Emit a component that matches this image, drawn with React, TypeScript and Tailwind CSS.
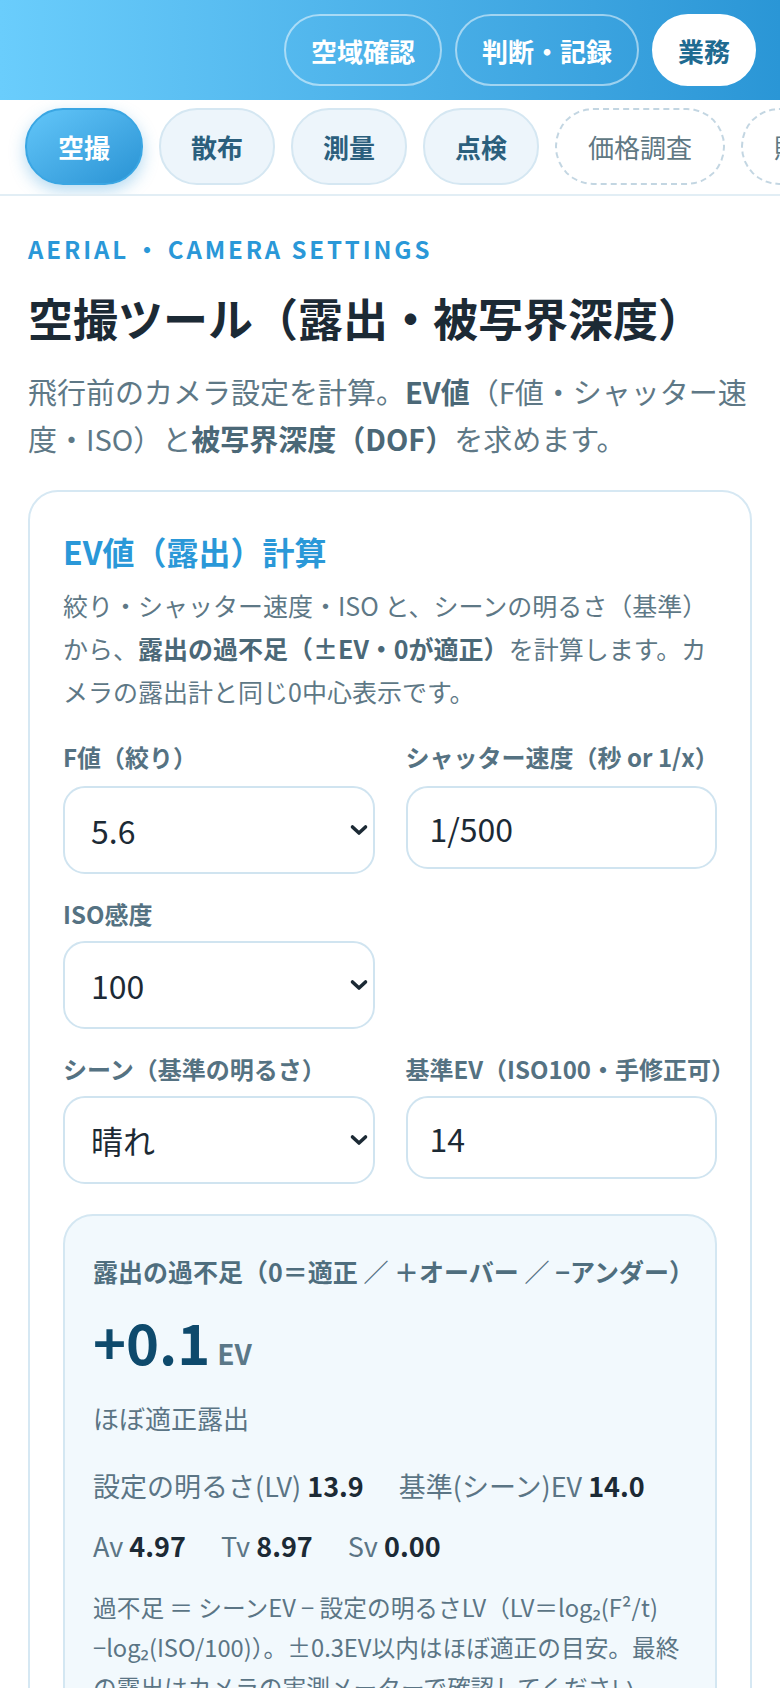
import { useState } from "react";

const topLinks = ["空域確認", "判断・記録"];
const tabs = ["空撮", "散布", "測量", "点検"];
const extraTabs = ["価格調査", "販売"];

function Chevron() {
  return (
    <svg
      className="pointer-events-none absolute right-[6px] top-1/2 -translate-y-1/2"
      width="20"
      height="13"
      viewBox="0 0 20 13"
      fill="none"
    >
      <path d="M3.5 3.5 L10 9.5 L16.5 3.5" stroke="#1c2a35" strokeWidth="3.6" strokeLinecap="round" strokeLinejoin="round" />
    </svg>
  );
}

const selectCls =
  "h-[88px] w-full appearance-none rounded-[22px] border-2 border-[#d0e4f0] bg-white pl-[26px] pr-[30px] text-[32px] text-[#1c2a35] outline-none";
const inputCls =
  "h-[83px] w-full rounded-[22px] border-2 border-[#d0e4f0] bg-white px-[22px] text-[32px] text-[#1c2a35] outline-none";
const labelCls = "block whitespace-nowrap text-[24px] font-bold leading-[36px] text-[#557282]";

export default function App() {
  const [fNum, setFNum] = useState("5.6");
  const [shutter, setShutter] = useState("1/500");
  const [iso, setIso] = useState("100");
  const [scene, setScene] = useState("sunny");
  const [baseEv, setBaseEv] = useState("14");

  return (
    <div
      className="min-h-screen bg-white text-[#1c2a35]"
      style={{ fontFamily: '"Noto Sans CJK JP", "Noto Sans", sans-serif' }}
    >
      {/* header */}
      <header className="flex h-[100px] items-center justify-end gap-[13px] bg-gradient-to-r from-[#6acdfc] to-[#2a96d6] pr-[24px]">
        {topLinks.map((t) => (
          <button
            key={t}
            className="flex h-[72px] items-center rounded-full border-2 border-white/50 px-[25px] text-[26px] font-bold text-white"
          >
            {t}
          </button>
        ))}
        <button className="flex h-[72px] items-center rounded-full border-2 border-white bg-white px-[24px] text-[26px] font-bold text-[#1f6b91]">
          業務
        </button>
      </header>

      {/* tabs */}
      <nav className="flex gap-[16px] overflow-hidden border-b-2 border-[#e2eef5] pb-[9px] pl-[25px] pt-[8px]">
        {tabs.map((t, i) =>
          i === 0 ? (
            <button
              key={t}
              className="flex h-[77px] shrink-0 items-center rounded-[38px] border-2 border-[#3aa6e3] bg-gradient-to-br from-[#62c6f9] to-[#2893d4] px-[31px] text-[26px] font-bold text-white shadow-[0_6px_16px_rgba(42,150,214,0.35)]"
            >
              {t}
            </button>
          ) : (
            <button
              key={t}
              className="flex h-[77px] shrink-0 items-center rounded-[38px] border-2 border-[#d5e7f2] bg-[#edf5fb] px-[30px] text-[26px] font-bold text-[#2b5f7d]"
            >
              {t}
            </button>
          )
        )}
        {extraTabs.map((t) => (
          <button
            key={t}
            className="flex h-[77px] shrink-0 items-center rounded-[38px] border-2 border-dashed border-[#c3d6e2] bg-white px-[31px] text-[26px] text-[#5f7883]"
          >
            {t}
          </button>
        ))}
      </nav>

      <main className="px-[28px] pt-[35px]">
        <p className="text-[24px] font-bold leading-[36px] tracking-[0.12em] text-[#2a98d8]">
          AERIAL<span className="mx-[6px]">・</span>CAMERA SETTINGS
        </p>
        <h1 className="mt-[22px] text-[45px] font-bold leading-[58px] text-[#1c2a35]">
          空撮ツール（露出・被写界深度）
        </h1>
        <p className="mt-[21px] text-[29px] leading-[47px] text-[#5e7886]">
          飛行前のカメラ設定を計算。<b className="text-[#4b6877]">EV値</b>（F値・シャッター速度・ISO）と
          <b className="text-[#4b6877]">被写界深度（DOF）</b>を求めます。
        </p>

        <section className="mt-[28px] rounded-[30px] border-2 border-[#d6e8f3] bg-white px-[33px] pb-[40px] pt-[36px]">
          <h2 className="text-[32px] font-bold leading-[46px] text-[#2a98d8]">EV値（露出）計算</h2>
          <p className="mt-[10px] pr-[6px] text-[25px] leading-[43px] text-[#5e7886]">
            絞り・シャッター速度・ISO と、シーンの明るさ（基準）から、
            <b className="text-[#4b6877]">露出の過不足（±EV・0が適正）</b>を計算します。カメラの露出計と同じ0中心表示です。
          </p>

          <div className="mt-[26px] grid grid-cols-2 gap-x-[31px] gap-y-[22px]">
            <label className="block">
              <span className={`mb-[11px] ${labelCls}`}>F値（絞り）</span>
              <div className="relative">
                <select value={fNum} onChange={(e) => setFNum(e.target.value)} className={selectCls}>
                  {["1.8", "2.8", "4", "5.6", "8", "11", "16"].map((v) => (
                    <option key={v} value={v}>
                      {v}
                    </option>
                  ))}
                </select>
                <Chevron />
              </div>
            </label>
            <label className="block">
              <span className={`mb-[11px] ${labelCls}`}>シャッター速度（秒 or 1/x）</span>
              <input value={shutter} onChange={(e) => setShutter(e.target.value)} className={inputCls} />
            </label>

            <label className="block">
              <span className={`mb-[9px] ${labelCls}`}>ISO感度</span>
              <div className="relative">
                <select value={iso} onChange={(e) => setIso(e.target.value)} className={selectCls}>
                  {["100", "200", "400", "800", "1600"].map((v) => (
                    <option key={v} value={v}>
                      {v}
                    </option>
                  ))}
                </select>
                <Chevron />
              </div>
            </label>
            <div />

            <label className="block">
              <span className={`mb-[9px] ${labelCls}`}>シーン（基準の明るさ）</span>
              <div className="relative">
                <select value={scene} onChange={(e) => setScene(e.target.value)} className={selectCls}>
                  <option value="sunny">晴れ</option>
                  <option value="cloudy">曇り</option>
                  <option value="shade">日陰</option>
                </select>
                <Chevron />
              </div>
            </label>
            <label className="block">
              <span className={`mb-[9px] ${labelCls}`}>基準EV（ISO100・手修正可）</span>
              <input value={baseEv} onChange={(e) => setBaseEv(e.target.value)} className={inputCls} />
            </label>
          </div>

          <div className="mt-[30px] rounded-[30px] border-2 border-[#d4e7f2] bg-[#f2f9fd] px-[28px] pb-[36px] pt-[37px]">
            <p className="whitespace-nowrap text-[25px] font-bold leading-[36px] text-[#4f6e7e]">
              露出の過不足（0＝適正 ／ ＋オーバー ／ −アンダー）
            </p>
            <p className="mt-[16px] leading-[72px]">
              <span className="text-[56px] font-bold text-[#0e4a6c]">+0.1</span>
              <span className="ml-[7px] text-[28px] font-bold text-[#5b7888]">EV</span>
            </p>
            <p className="mt-[4px] text-[26px] leading-[39px] text-[#5b7585]">ほぼ適正露出</p>

            <div className="mt-[29px] flex flex-col gap-[21px] text-[27px] leading-[39px] text-[#5b7585]">
              <div className="flex gap-x-[35px]">
                <span>
                  設定の明るさ(LV) <b className="text-[#1c2a35]">13.9</b>
                </span>
                <span>
                  基準(シーン)EV <b className="text-[#1c2a35]">14.0</b>
                </span>
              </div>
              <div className="flex gap-x-[35px]">
                <span>
                  Av <b className="text-[#1c2a35]">4.97</b>
                </span>
                <span>
                  Tv <b className="text-[#1c2a35]">8.97</b>
                </span>
                <span>
                  Sv <b className="text-[#1c2a35]">0.00</b>
                </span>
              </div>
            </div>

            <p className="mt-[22px] text-[23.7px] leading-[40px] text-[#5b7585]">
              過不足 ＝ シーンEV − 設定の明るさLV（LV＝log₂(F²/t) −log₂(ISO/100)）。±0.3EV以内はほぼ適正の目安。最終の露出はカメラの実測メーターで確認してください。
            </p>
          </div>
        </section>
      </main>
    </div>
  );
}
